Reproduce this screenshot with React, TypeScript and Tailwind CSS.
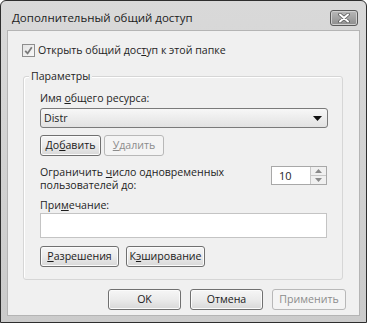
import React from "react";

const font = { fontFamily: '"Open Sans", "Noto Sans", sans-serif' };

function Btn({ children, disabled, className }: { children: React.ReactNode; disabled?: boolean; className?: string }) {
  return (
    <button
      type="button"
      className={`flex h-[21px] items-center justify-center rounded-[3px] border text-[10.6px] leading-none ${
        disabled
          ? "border-[#b8b8b8] bg-[#f4f4f4] text-[#8c8c8c]"
          : "border-[#707070] bg-gradient-to-b from-[#f6f6f6] via-[#ebebeb] to-[#d8d8d8] text-[#1a1a1a] shadow-[inset_0_0_0_1px_#fbfbfb]"
      } ${className ?? ""}`}
    >
      {children}
    </button>
  );
}

function Mn({ children }: { children: React.ReactNode }) {
  return <span className="underline decoration-1 underline-offset-[1px]">{children}</span>;
}

export default function App() {
  return (
    <div className="h-[324px] w-[367px] bg-white" style={font}>
      <div className="flex h-[323px] w-[367px] flex-col rounded-t-[6px] border border-[#2e2e2e] bg-gradient-to-b from-[#d9d9d9] to-[#cbcbcb]">
        {/* title bar */}
        <div className="flex h-[29px] shrink-0 items-center justify-between pl-[11px] pr-[8px]">
          <span className="mt-[5px] text-[11.5px] text-[#1c1c1c]">Дополнительный общий доступ</span>
          <div className="mt-[4px] flex h-[16px] w-[28px] shrink-0 items-center justify-center rounded-[3px] border border-[#5a5a5a] bg-gradient-to-b from-[#b8b8b8] to-[#8e8e8e] shadow-[inset_0_0_0_1px_#cfcfcf]">
            <svg width="12" height="10" viewBox="0 0 12 10">
              <path d="M2 1.5 L10 8.5 M10 1.5 L2 8.5" stroke="#5a5a5a" strokeWidth="3.6" strokeLinecap="round" />
              <path d="M2 1.5 L10 8.5 M10 1.5 L2 8.5" stroke="#ffffff" strokeWidth="2" strokeLinecap="round" />
            </svg>
          </div>
        </div>

        {/* client area */}
        <div className="mx-[6px] h-[286px] border border-[#b4b4b4] bg-[#f0f0f0] text-[10.6px] leading-[13px] text-[#1e1e1e]">
          <div className="ml-[14px] mt-[13px] flex h-[13px] items-center gap-[3px]">
            <div className="flex h-[13px] w-[13px] shrink-0 items-center justify-center border border-[#8e8e8e] bg-gradient-to-br from-[#e4e4e4] to-[#f8f8f8]">
              <svg width="9" height="9" viewBox="0 0 9 9">
                <path d="M1.2 4.8 L3.6 7.4 L7.8 1.2" fill="none" stroke="#7a7a7a" strokeWidth="1.8" />
              </svg>
            </div>
            <span>
              Открыть общий дос<Mn>т</Mn>уп к этой папке
            </span>
          </div>

          {/* group box */}
          <div className="relative ml-[15px] mt-[19px] w-[320px] rounded-[3px] border border-[#d6d6d6] pb-[12px] pl-[16px] pr-[14px] pt-[15px] shadow-[inset_1px_1px_0_#ffffff]">
            <span className="absolute left-[5px] top-[-7px] bg-[#f0f0f0] px-[2px]">Параметры</span>

            <div className="h-[14px]">
              Имя <Mn>о</Mn>бщего ресурса:
            </div>
            <div className="mt-[2px] flex h-[20px] items-center justify-between rounded-[3px] border border-[#7a7a7a] bg-gradient-to-b from-[#f7f7f7] to-[#e2e2e2] pl-[3px] pr-[5px]">
              <span>Distr</span>
              <svg width="9" height="5" viewBox="0 0 9 5">
                <path d="M0 0 H9 L4.5 5 Z" fill="#111" />
              </svg>
            </div>

            <div className="mt-[7px] flex gap-[3px]">
              <Btn className="w-[61px] border-[#555] shadow-[inset_0_0_0_1px_#c4c4c4]">
                До<Mn>б</Mn>авить
              </Btn>
              <Btn disabled className="w-[60px]">
                <Mn>У</Mn>далить
              </Btn>
            </div>

            <div className="mt-[10px] flex items-start justify-between">
              <div>
                <div className="h-[13px]">
                  Ограничить <Mn>ч</Mn>исло одновременных
                </div>
                <div className="h-[13px]">пользователей до:</div>
              </div>
              <div className="mr-[1px] flex h-[19px] w-[56px] border border-[#a8a8a8] bg-white">
                <span className="flex-1 pl-[7px] pt-[2px] text-[11px]">10</span>
                <div className="flex w-[16px] flex-col border-l border-[#c8c8c8]">
                  <div className="flex flex-1 items-center justify-center border-b border-[#c8c8c8] bg-[#f0f0f0]">
                    <svg width="7" height="4" viewBox="0 0 7 4">
                      <path d="M0 4 L3.5 0 L7 4 Z" fill="#8a8a8a" />
                    </svg>
                  </div>
                  <div className="flex flex-1 items-center justify-center bg-[#f0f0f0]">
                    <svg width="7" height="4" viewBox="0 0 7 4">
                      <path d="M0 0 L3.5 4 L7 0 Z" fill="#8a8a8a" />
                    </svg>
                  </div>
                </div>
              </div>
            </div>

            <div className="mt-[7px] h-[13px]">
              При<Mn>м</Mn>ечание:
            </div>
            <div className="mt-[1px] h-[25px] w-[287px] border border-[#c4c4c4] bg-white" />

            <div className="mt-[8px] flex gap-[7px]">
              <Btn className="w-[79px]">
                <Mn>Р</Mn>азрешения
              </Btn>
              <Btn className="w-[79px]">
                К<Mn>э</Mn>ширование
              </Btn>
            </div>
          </div>

          <div className="ml-[100px] mt-[9px] flex gap-[9px]">
            <Btn className="w-[73px]">OK</Btn>
            <Btn className="w-[73px]">Отмена</Btn>
            <Btn disabled className="w-[74px]">
              Применить
            </Btn>
          </div>
        </div>
      </div>
    </div>
  );
}
